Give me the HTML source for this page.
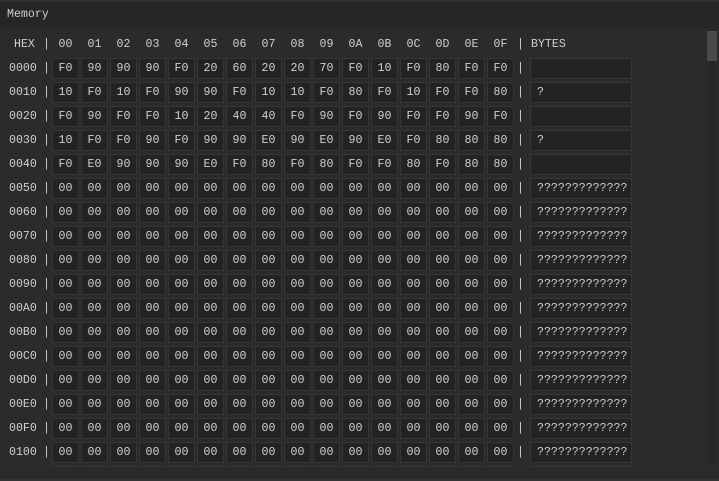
<!DOCTYPE html>
<html><head><style>
*{margin:0;padding:0;box-sizing:border-box}
body{width:719px;height:481px;background:#2a2a2a;overflow:hidden;font-family:"Liberation Mono",monospace;font-size:11.6px;color:#cfcfcf;position:relative}
#title{position:absolute;left:0;top:0;width:719px;height:29px;background:#262626;border-top:2px solid #333;padding:6px 0 0 7px}
#content{position:absolute;left:0;top:29px;width:705px;height:438px;overflow:hidden;background:#2b2b2b}
#bot{position:absolute;left:0;top:479px;width:719px;height:2px;background:#333}
#sb{position:absolute;left:706px;top:30px;width:11px;height:437px;background:#282828}
#th{position:absolute;left:707px;top:31px;width:10px;height:30px;background:#4a4a4a}
.r{position:absolute;left:0;height:21px;width:705px;line-height:21px;white-space:nowrap}
.l{position:absolute;left:9px}
.p1{position:absolute;left:43px}
.p2{position:absolute;left:517px}
.g{position:absolute;left:52px;top:0;display:flex;gap:2px}
.g span{width:27px;height:21px;background:#232323;border:1px solid #363636;text-align:center;line-height:19px}
.hg{position:absolute;left:52px;top:0;display:flex;gap:2px}
.hg span{width:27px;text-align:center}
.b{position:absolute;left:530px;width:102px;height:21px;background:#232323;border:1px solid #363636;padding-left:6px;line-height:19px}
</style></head><body>
<div id="title">Memory</div>
<div id="content">
<div class="r" style="top:5px"><span class="l" style="left:14px">HEX</span><span class="p1">|</span><div class="hg"><span>00</span><span>01</span><span>02</span><span>03</span><span>04</span><span>05</span><span>06</span><span>07</span><span>08</span><span>09</span><span>0A</span><span>0B</span><span>0C</span><span>0D</span><span>0E</span><span>0F</span></div><span class="p2">|</span><span style="position:absolute;left:531px">BYTES</span></div>
<div class="r" style="top:29px"><span class="l">0000</span><span class="p1">|</span><div class="g"><span>F0</span><span>90</span><span>90</span><span>90</span><span>F0</span><span>20</span><span>60</span><span>20</span><span>20</span><span>70</span><span>F0</span><span>10</span><span>F0</span><span>80</span><span>F0</span><span>F0</span></div><span class="p2">|</span><div class="b"></div></div>
<div class="r" style="top:53px"><span class="l">0010</span><span class="p1">|</span><div class="g"><span>10</span><span>F0</span><span>10</span><span>F0</span><span>90</span><span>90</span><span>F0</span><span>10</span><span>10</span><span>F0</span><span>80</span><span>F0</span><span>10</span><span>F0</span><span>F0</span><span>80</span></div><span class="p2">|</span><div class="b">?</div></div>
<div class="r" style="top:77px"><span class="l">0020</span><span class="p1">|</span><div class="g"><span>F0</span><span>90</span><span>F0</span><span>F0</span><span>10</span><span>20</span><span>40</span><span>40</span><span>F0</span><span>90</span><span>F0</span><span>90</span><span>F0</span><span>F0</span><span>90</span><span>F0</span></div><span class="p2">|</span><div class="b"></div></div>
<div class="r" style="top:101px"><span class="l">0030</span><span class="p1">|</span><div class="g"><span>10</span><span>F0</span><span>F0</span><span>90</span><span>F0</span><span>90</span><span>90</span><span>E0</span><span>90</span><span>E0</span><span>90</span><span>E0</span><span>F0</span><span>80</span><span>80</span><span>80</span></div><span class="p2">|</span><div class="b">?</div></div>
<div class="r" style="top:125px"><span class="l">0040</span><span class="p1">|</span><div class="g"><span>F0</span><span>E0</span><span>90</span><span>90</span><span>90</span><span>E0</span><span>F0</span><span>80</span><span>F0</span><span>80</span><span>F0</span><span>F0</span><span>80</span><span>F0</span><span>80</span><span>80</span></div><span class="p2">|</span><div class="b"></div></div>
<div class="r" style="top:149px"><span class="l">0050</span><span class="p1">|</span><div class="g"><span>00</span><span>00</span><span>00</span><span>00</span><span>00</span><span>00</span><span>00</span><span>00</span><span>00</span><span>00</span><span>00</span><span>00</span><span>00</span><span>00</span><span>00</span><span>00</span></div><span class="p2">|</span><div class="b">?????????????</div></div>
<div class="r" style="top:173px"><span class="l">0060</span><span class="p1">|</span><div class="g"><span>00</span><span>00</span><span>00</span><span>00</span><span>00</span><span>00</span><span>00</span><span>00</span><span>00</span><span>00</span><span>00</span><span>00</span><span>00</span><span>00</span><span>00</span><span>00</span></div><span class="p2">|</span><div class="b">?????????????</div></div>
<div class="r" style="top:197px"><span class="l">0070</span><span class="p1">|</span><div class="g"><span>00</span><span>00</span><span>00</span><span>00</span><span>00</span><span>00</span><span>00</span><span>00</span><span>00</span><span>00</span><span>00</span><span>00</span><span>00</span><span>00</span><span>00</span><span>00</span></div><span class="p2">|</span><div class="b">?????????????</div></div>
<div class="r" style="top:221px"><span class="l">0080</span><span class="p1">|</span><div class="g"><span>00</span><span>00</span><span>00</span><span>00</span><span>00</span><span>00</span><span>00</span><span>00</span><span>00</span><span>00</span><span>00</span><span>00</span><span>00</span><span>00</span><span>00</span><span>00</span></div><span class="p2">|</span><div class="b">?????????????</div></div>
<div class="r" style="top:245px"><span class="l">0090</span><span class="p1">|</span><div class="g"><span>00</span><span>00</span><span>00</span><span>00</span><span>00</span><span>00</span><span>00</span><span>00</span><span>00</span><span>00</span><span>00</span><span>00</span><span>00</span><span>00</span><span>00</span><span>00</span></div><span class="p2">|</span><div class="b">?????????????</div></div>
<div class="r" style="top:269px"><span class="l">00A0</span><span class="p1">|</span><div class="g"><span>00</span><span>00</span><span>00</span><span>00</span><span>00</span><span>00</span><span>00</span><span>00</span><span>00</span><span>00</span><span>00</span><span>00</span><span>00</span><span>00</span><span>00</span><span>00</span></div><span class="p2">|</span><div class="b">?????????????</div></div>
<div class="r" style="top:293px"><span class="l">00B0</span><span class="p1">|</span><div class="g"><span>00</span><span>00</span><span>00</span><span>00</span><span>00</span><span>00</span><span>00</span><span>00</span><span>00</span><span>00</span><span>00</span><span>00</span><span>00</span><span>00</span><span>00</span><span>00</span></div><span class="p2">|</span><div class="b">?????????????</div></div>
<div class="r" style="top:317px"><span class="l">00C0</span><span class="p1">|</span><div class="g"><span>00</span><span>00</span><span>00</span><span>00</span><span>00</span><span>00</span><span>00</span><span>00</span><span>00</span><span>00</span><span>00</span><span>00</span><span>00</span><span>00</span><span>00</span><span>00</span></div><span class="p2">|</span><div class="b">?????????????</div></div>
<div class="r" style="top:341px"><span class="l">00D0</span><span class="p1">|</span><div class="g"><span>00</span><span>00</span><span>00</span><span>00</span><span>00</span><span>00</span><span>00</span><span>00</span><span>00</span><span>00</span><span>00</span><span>00</span><span>00</span><span>00</span><span>00</span><span>00</span></div><span class="p2">|</span><div class="b">?????????????</div></div>
<div class="r" style="top:365px"><span class="l">00E0</span><span class="p1">|</span><div class="g"><span>00</span><span>00</span><span>00</span><span>00</span><span>00</span><span>00</span><span>00</span><span>00</span><span>00</span><span>00</span><span>00</span><span>00</span><span>00</span><span>00</span><span>00</span><span>00</span></div><span class="p2">|</span><div class="b">?????????????</div></div>
<div class="r" style="top:389px"><span class="l">00F0</span><span class="p1">|</span><div class="g"><span>00</span><span>00</span><span>00</span><span>00</span><span>00</span><span>00</span><span>00</span><span>00</span><span>00</span><span>00</span><span>00</span><span>00</span><span>00</span><span>00</span><span>00</span><span>00</span></div><span class="p2">|</span><div class="b">?????????????</div></div>
<div class="r" style="top:413px"><span class="l">0100</span><span class="p1">|</span><div class="g"><span>00</span><span>00</span><span>00</span><span>00</span><span>00</span><span>00</span><span>00</span><span>00</span><span>00</span><span>00</span><span>00</span><span>00</span><span>00</span><span>00</span><span>00</span><span>00</span></div><span class="p2">|</span><div class="b">?????????????</div></div>
<div class="r" style="top:437px"><span class="l">0110</span><span class="p1">|</span><div class="g"><span>00</span><span>00</span><span>00</span><span>00</span><span>00</span><span>00</span><span>00</span><span>00</span><span>00</span><span>00</span><span>00</span><span>00</span><span>00</span><span>00</span><span>00</span><span>00</span></div><span class="p2">|</span><div class="b">?????????????</div></div>
</div>
<div id="sb"></div><div id="th"></div><div id="bot"></div>
</body></html>
